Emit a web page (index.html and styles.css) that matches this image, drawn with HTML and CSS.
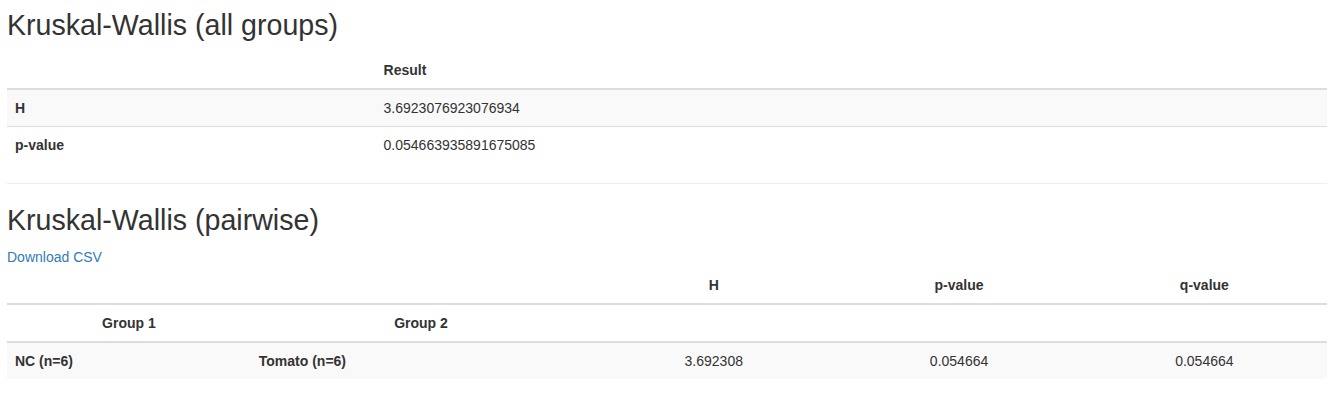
FILE: index.html
```html
<!DOCTYPE html>
<html>
<head>
<meta charset="utf-8">
<title>Kruskal-Wallis</title>
<link rel="stylesheet" href="styles.css">
</head>
<body>
<div class="page">
  <h2 class="title first">Kruskal-Wallis (all groups)</h2>
  <table class="table striped">
    <thead>
      <tr><th></th><th>Result</th></tr>
    </thead>
    <tbody>
      <tr><th>H</th><td>3.6923076923076934</td></tr>
      <tr><th>p-value</th><td>0.054663935891675085</td></tr>
    </tbody>
  </table>
  <hr class="rule">
  <h2 class="title">Kruskal-Wallis (pairwise)</h2>
  <a class="link" href="#">Download CSV</a>
  <table class="table striped pairwise">
    <thead>
      <tr><th></th><th></th><th>H</th><th>p-value</th><th>q-value</th></tr>
      <tr><th>Group 1</th><th>Group 2</th><th></th><th></th><th></th></tr>
    </thead>
    <tbody>
      <tr><th class="idx">NC (n=6)</th><th class="idx">Tomato (n=6)</th><td>3.692308</td><td>0.054664</td><td>0.054664</td></tr>
    </tbody>
  </table>
</div>
</body>
</html>
```
FILE: styles.css
```css
html, body {
  margin: 0;
  padding: 0;
  background: #fff;
}
body {
  font-family: "Liberation Sans", Arial, sans-serif;
  font-size: 14px;
  line-height: 1.42857143;
  color: #333;
}
.page {
  padding: 0 5px 0 7px;
}
.title {
  font-family: "Liberation Sans", Arial, sans-serif;
  font-weight: 500;
  font-size: 28.6px;
  line-height: 33px;
  color: #333;
  margin: 20px 0 10px;
}
.title.first {
  margin-top: 9px;
}
.link {
  display: block;
  color: #337ab7;
  text-decoration: none;
}
.table {
  width: 100%;
  border-collapse: collapse;
  border-spacing: 0;
  margin-bottom: 20px;
}
.table th,
.table td {
  padding: 8px;
  line-height: 1.42857143;
  vertical-align: top;
  border-top: 1px solid #ddd;
  text-align: left;
}
.table th {
  font-weight: bold;
}
.table thead th {
  vertical-align: bottom;
  border-bottom: 2px solid #ddd;
}
.table thead tr:first-child th {
  border-top: 0;
}
.table tbody tr:first-child th,
.table tbody tr:first-child td {
  border-top: 0;
}
.striped tbody tr:nth-of-type(odd) {
  background-color: #f9f9f9;
}
.pairwise th,
.pairwise td {
  text-align: center;
}
.pairwise .idx {
  text-align: left;
}
.rule {
  margin: 20px 0;
  border: 0;
  border-top: 1px solid #eee;
  height: 0;
}
```
